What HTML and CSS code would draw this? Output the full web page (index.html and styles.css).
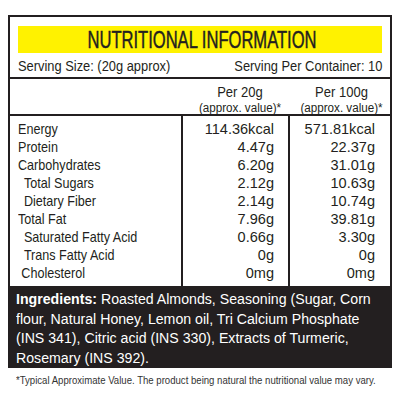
FILE: index.html
```html
<!DOCTYPE html>
<html>
<head>
<meta charset="utf-8">
<link rel="stylesheet" href="styles.css">
</head>
<body>
<div class="label">
  <div class="top">
    <div class="title"><span>NUTRITIONAL INFORMATION</span></div>
    <div class="serving">
      <span class="sl">Serving Size: (20g approx)</span>
      <span class="sr">Serving Per Container: 10</span>
    </div>
  </div>
  <div class="head">
    <div></div>
    <div class="hcell"><div class="per">Per 20g</div><div class="approx">(approx. value)*</div></div>
    <div class="hcell"><div class="per">Per 100g</div><div class="approx">(approx. value)*</div></div>
  </div>
  <div class="table">
    <div class="col names">
      <div>Energy</div>
      <div>Protein</div>
      <div>Carbohydrates</div>
      <div class="sub">Total Sugars</div>
      <div class="sub">Dietary Fiber</div>
      <div>Total Fat</div>
      <div class="sub">Saturated Fatty Acid</div>
      <div class="sub">Trans Fatty Acid</div>
      <div class="sub2">Cholesterol</div>
    </div>
    <div class="col vals">
      <div>114.36kcal</div>
      <div>4.47g</div>
      <div>6.20g</div>
      <div>2.12g</div>
      <div>2.14g</div>
      <div>7.96g</div>
      <div>0.66g</div>
      <div>0g</div>
      <div>0mg</div>
    </div>
    <div class="col vals last">
      <div>571.81kcal</div>
      <div>22.37g</div>
      <div>31.01g</div>
      <div>10.63g</div>
      <div>10.74g</div>
      <div>39.81g</div>
      <div>3.30g</div>
      <div>0g</div>
      <div>0mg</div>
    </div>
  </div>
  <div class="ingredients">
    <div class="ing-text"><b>Ingredients:</b> Roasted Almonds, Seasoning (Sugar, Corn<br>flour, Natural Honey, Lemon oil, Tri Calcium Phosphate<br>(INS 341), Citric acid (INS 330), Extracts of Turmeric,<br>Rosemary (INS 392).</div>
  </div>
</div>
<div class="note"><span>*Typical Approximate Value. The product being natural the nutritional value may vary.</span></div>
</body>
</html>
```
FILE: styles.css
```css
* { box-sizing: border-box; }
body {
  margin: 0;
  background: #fff;
  color: #231f20;
  font-family: "Liberation Sans", Arial, sans-serif;
}
.label {
  margin: 15px 8px 0;
  width: 384px;
  border: 2px solid #231f20;
}
.top {
  padding: 9px 8px 0;
  border-bottom: 2px solid #231f20;
}
.title {
  background: #fff200;
  height: 27px;
  display: flex;
  justify-content: center;
  align-items: center;
  overflow: hidden;
}
.title span {
  font-size: 24px;
  line-height: 27px;
  transform: scaleX(0.69);
  white-space: nowrap;
  -webkit-text-stroke: 0.45px #231f20;
  margin-left: 3px;
}
.serving {
  display: flex;
  justify-content: space-between;
  font-size: 15.5px;
  height: 24px;
  line-height: 25px;
  white-space: nowrap;
}
.serving span { display: inline-block; transform: scaleX(0.83); }
.serving .sl { transform-origin: left center; }
.serving .sr { transform-origin: right center; }
.head {
  display: grid;
  grid-template-columns: 1fr 106px 97px;
  height: 37px;
  border-bottom: 2px solid #231f20;
  text-align: center;
  padding-top: 5px;
  white-space: nowrap;
}
.per { font-size: 14px; line-height: 17px; transform: scaleX(0.93); }
.approx { font-size: 12px; line-height: 14px; transform: scaleX(0.97); }
.table {
  display: grid;
  grid-template-columns: 171px 107px 1fr;
}
.col {
  padding: 4px 0 4px;
  font-size: 15px;
  white-space: nowrap;
}
.col div { height: 18px; line-height: 18px; }
.names { padding-left: 8px; }
.names div { transform: scaleX(0.84); transform-origin: left center; }
.names .sub { padding-left: 7px; }
.names .sub2 { padding-left: 4px; }
.vals {
  border-left: 2px solid #231f20;
  text-align: right;
  padding-right: 14px;
}
.vals div { transform: scaleX(0.97); transform-origin: right center; }
.vals.last { padding-right: 15px; }
.ingredients {
  background: #231f20;
  color: #fff;
  font-size: 15.5px;
  line-height: 19.5px;
  padding: 3px 6px 0;
  height: 80px;
}
.ing-text {
  white-space: nowrap;
  transform: scaleX(0.913);
  transform-origin: left top;
}
.ingredients b { font-weight: bold; }
.note {
  margin: 5px 0 0 16px;
  font-size: 10.5px;
  line-height: 14px;
  color: #333;
  white-space: nowrap;
}
.note span { display: inline-block; transform: scaleX(0.913); transform-origin: left center; }
```
